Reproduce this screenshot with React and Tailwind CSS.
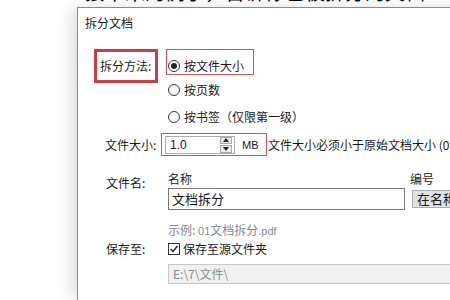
import React from "react";

const cjk = { fontFamily: '"Noto Sans CJK SC", "Noto Sans", sans-serif' };
const latin = { fontFamily: '"Liberation Sans", "Noto Sans CJK SC", sans-serif' };

const Radio = ({ checked }) => (
  <span className="w-[12px] h-[12px] rounded-full border border-[#333333] bg-white flex items-center justify-center shrink-0">
    {checked && <span className="w-[6px] h-[6px] rounded-full bg-[#222222]" />}
  </span>
);

const Checkbox = () => (
  <span className="w-[12px] h-[12px] border border-[#333333] bg-white flex items-center justify-center shrink-0">
    <svg width="10" height="10" viewBox="0 0 10 10">
      <path d="M1.5 5 L4 7.5 L8.5 2" fill="none" stroke="#222" strokeWidth="1.4" />
    </svg>
  </span>
);

const Spinner = () => (
  <div className="w-[12px] h-[16px] flex flex-col gap-px mr-[2px]">
    <div className="flex-1 bg-[#ececec] border border-[#a9a9a9] flex items-center justify-center">
      <svg width="6" height="4" viewBox="0 0 6 4">
        <path d="M0 4 L3 0 L6 4 Z" fill="#222" />
      </svg>
    </div>
    <div className="flex-1 bg-[#ececec] border border-[#a9a9a9] flex items-center justify-center">
      <svg width="6" height="4" viewBox="0 0 6 4">
        <path d="M0 0 L3 4 L6 0 Z" fill="#222" />
      </svg>
    </div>
  </div>
);

const App = () => {
  return (
    <div
      className="w-[450px] h-[300px] overflow-hidden bg-white text-[12px] text-[#1a1a1a]"
      style={cjk}
    >
      {/* page text behind the dialog, only its lower edge shows */}
      <div className="h-[7px] overflow-hidden">
        <div className="mt-[-20px] pl-[85px] text-[20px] leading-[24px] text-black whitespace-nowrap">
          接下来的例子，告诉你已被拆分的文档一一用来分享给
        </div>
      </div>

      <div className="ml-[77px] w-[420px] h-[293px] bg-white border-l border-t border-[#8a8a8a] shadow-[-7px_0_16px_-2px_rgba(0,0,0,0.14)]">
        <div className="pl-[7px] pt-[7px] leading-[16px]">拆分文档</div>

        {/* split method */}
        <div className="mt-[18px] flex items-start">
          <div className="ml-[16px] w-[64px] h-[34px] border-[3px] border-[#c4413f] pl-[3px] flex items-center leading-[16px]">
            拆分方法:
          </div>
          <div className="ml-[8px] flex flex-col">
            <div className="w-[88px] h-[26px] border border-[#c65a59] pl-px pt-[7px] flex items-center gap-[4px] leading-[16px]">
              <Radio checked />
              <span>按文件大小</span>
            </div>
            <div className="mt-[3px] h-[24px] pl-[2px] flex items-center gap-[4px] leading-[16px]">
              <Radio />
              <span>按页数</span>
            </div>
            <div className="mt-[3px] h-[24px] pl-[2px] flex items-center gap-[4px] leading-[16px] whitespace-nowrap">
              <Radio />
              <span>按书签（仅限第一级）</span>
            </div>
          </div>
        </div>

        {/* file size */}
        <div className="mt-[4px] h-[23px] flex items-center leading-[16px] whitespace-nowrap">
          <div className="ml-[27px] w-[56px]">文件大小:</div>
          <div className="w-[106px] h-[23px] border border-[#c65a59] pl-[3px] flex items-center">
            <div className="w-[70px] h-[18px] border border-[#abadb3] flex items-center">
              <span className="flex-1 pl-[4px] text-[12px]" style={latin}>
                1.0
              </span>
              <Spinner />
            </div>
            <span className="ml-[7px] text-[11px]" style={latin}>
              MB
            </span>
          </div>
          <span className="ml-px">文件大小必须小于原始文档大小 (0</span>
        </div>

        {/* file name */}
        <div className="mt-[16px] flex items-start leading-[16px] whitespace-nowrap">
          <div className="ml-[28px] w-[62px] mt-[3px]">文件名:</div>
          <div className="flex flex-col">
            <div className="leading-[14px]">名称</div>
            <div className="mt-[2px] w-[237px] h-[22px] border border-[#7a7a7a] pl-[3px] flex items-center text-[13px]">
              文档拆分
            </div>
          </div>
          <div className="ml-[5px] flex flex-col">
            <div className="leading-[14px]">编号</div>
            <div className="mt-[4px] ml-[2px] h-[18px] px-[4px] bg-[#e1e1e1] border border-[#adadad] flex items-center text-[13px]">
              在名称前
            </div>
          </div>
        </div>

        <div className="mt-[12px] ml-[90px] leading-[16px] text-[#7d8896]">
          示例: <span style={latin} className="text-[11px]">01</span>文档拆分<span style={latin} className="text-[11px]">.pdf</span>
        </div>

        {/* save to */}
        <div className="mt-[2px] h-[16px] flex items-center leading-[16px]">
          <div className="ml-[28px] w-[62px]">保存至:</div>
          <Checkbox />
          <span className="ml-[3px]">保存至源文件夹</span>
        </div>

        <div className="mt-[7px] ml-[90px] h-[20px] bg-[#f0f0f0] border border-[#c9c9c9] pl-[4px] flex items-center text-[#8d8d8d] leading-[16px]">
          E:\7\文件\
        </div>
      </div>
    </div>
  );
};

export default App;
